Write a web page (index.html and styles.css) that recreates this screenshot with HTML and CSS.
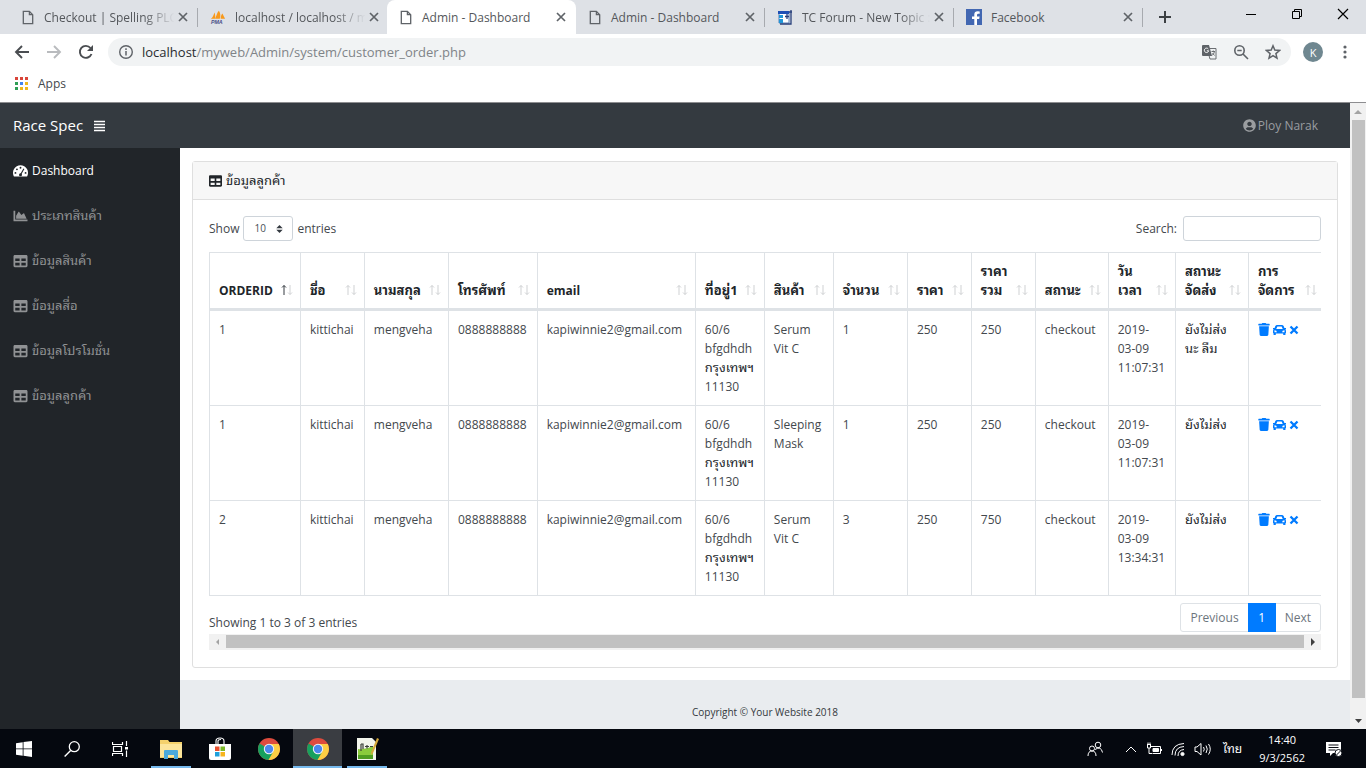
FILE: index.html
```html
<!DOCTYPE html>
<html lang="th">
<head>
<meta charset="utf-8">
<title>Admin - Dashboard</title>
<link rel="stylesheet" href="styles.css">
</head>
<body>
<svg class="defs" aria-hidden="true">
  <symbol id="close" viewBox="0 0 10 10"><path d="M1 1l8 8M9 1L1 9" stroke="currentColor" stroke-width="1.7"/></symbol>
  <symbol id="file" viewBox="0 0 12 16"><path d="M1 1.500h6.500L11 5v9.500H1zM7.500 1.500V5H11" fill="none" stroke="currentColor" stroke-width="1.400"/></symbol>
  <symbol id="table" viewBox="0 0 512 512"><path fill="currentColor" d="M464 32H48C21.490 32 0 53.490 0 80v352c0 26.510 21.490 48 48 48h416c26.510 0 48-21.490 48-48V80c0-26.510-21.490-48-48-48zM224 416H64v-96h160v96zm0-160H64v-96h160v96zm224 160H288v-96h160v96zm0-160H288v-96h160v96z"/></symbol>
  <symbol id="area" viewBox="0 0 512 512"><path fill="currentColor" d="M500 384c6.600 0 12 5.400 12 12v40c0 6.600-5.400 12-12 12H12c-6.600 0-12-5.400-12-12V76c0-6.600 5.400-12 12-12h40c6.600 0 12 5.400 12 12v308h436zM372.700 159.500L288 216l-85.300-113.700c-5.100-6.800-15.500-6.300-19.900 1L96 248v104h384l-89.900-187.800c-3.200-6.500-11.400-8.700-17.400-4.700z"/></symbol>
  <symbol id="gauge" viewBox="0 0 16 14"><path fill="currentColor" d="M8 1a8 8 0 0 0-7 11.900h14A8 8 0 0 0 8 1z"/><g fill="#212529"><circle cx="2.600" cy="9" r="1"/><circle cx="4.200" cy="5.200" r="1"/><circle cx="8" cy="3.500" r="1"/><circle cx="13.400" cy="9" r="1"/></g><path d="M8 11l3.600-6.400" stroke="#212529" stroke-width="1.200"/><circle cx="8" cy="11" r="1.600" fill="#212529"/></symbol>
  <symbol id="user" viewBox="0 0 496 512"><path fill="currentColor" d="M248 8C111 8 0 119 0 256s111 248 248 248 248-111 248-248S385 8 248 8zm0 96c48.600 0 88 39.400 88 88s-39.400 88-88 88-88-39.400-88-88 39.400-88 88-88zm0 344c-58.700 0-111.300-26.600-146.500-68.200 18.800-35.400 55.600-59.800 98.500-59.800 2.400 0 4.800.4 7.100 1.100 13 4.200 26.600 6.900 40.900 6.900 14.300 0 28-2.700 40.900-6.900 2.300-.7 4.700-1.100 7.100-1.100 42.900 0 79.700 24.400 98.500 59.800C359.300 421.400 306.700 448 248 448z"/></symbol>
  <symbol id="trash" viewBox="0 0 448 512"><path fill="currentColor" d="M432 32H312l-9.400-18.700A24 24 0 0 0 281.100 0H166.800a23.720 23.720 0 0 0-21.400 13.300L136 32H16A16 16 0 0 0 0 48v32a16 16 0 0 0 16 16h416a16 16 0 0 0 16-16V48a16 16 0 0 0-16-16zM53.200 467a48 48 0 0 0 47.900 45h245.800a48 48 0 0 0 47.900-45L416 128H32z"/></symbol>
  <symbol id="car" viewBox="0 0 14 12"><path fill="currentColor" fill-rule="evenodd" d="M4.500.5h5q1.500 0 2.100 1.500l.7 1.900H14v1.200h-.8Q14 6 14 7v2l-.6.700v1.800h-2.400V9.800H3v1.700H.6V9.700L0 9V7q0-1 .8-1.900H0V3.900h1.700L2.400 2Q3 .5 4.500.5zM4.700 2.200L3.500 4.800h7L9.300 2.200zM1.600 6.300v2h2.600q0-1.800-2.600-2zm10.800 0v2H9.800q0-1.800 2.600-2z"/></symbol>
  <symbol id="times" viewBox="0 0 10 10"><path d="M1.500 1.500l7 7M8.500 1.500l-7 7" stroke="currentColor" stroke-width="2.300"/></symbol>
  <symbol id="sort" viewBox="0 0 12 12"><path d="M3 11V1.500M1 3.500l2-2 2 2" stroke="currentColor"/><path d="M9 1v9.500M7 8.500l2 2 2-2" stroke="#cfd1d3"/></symbol>
  <symbol id="chrome" viewBox="0 0 24 24"><circle cx="12" cy="12" r="11" fill="#dd4b3e"/><path d="M12 12L2.500 6.500A11 11 0 0 0 11.500 23l5.300-8.300z" fill="#17a05e"/><path d="M12 7h9.800A11 11 0 0 1 11.500 23l4.900-8.500z" fill="#fdce44"/><circle cx="12" cy="12" r="5.200" fill="#f4f4f4"/><circle cx="12" cy="12" r="4.200" fill="#4a87ee"/></symbol>
</svg>

<header class="browser">
  <div class="tabstrip">
    <div class="tab"><svg class="fav"><use href="#file"/></svg><span class="title fade">Checkout | Spelling PLC</span><button class="x" aria-label="Close tab"><svg><use href="#close"/></svg></button></div>
    <div class="tab"><svg class="fav wide" viewBox="0 0 18 16"><path d="M1 10c2-1 3-4 4-7 1 2 1 5 1 7zM6 10c1-3 2-7 4-9 2 3 2 6 1 9zM12 10c0-3 1-5 2-6 1 2 2 4 3 6z" fill="#f8991c"/><text x="1" y="16" class="pma">PMA</text></svg><span class="title fade">localhost / localhost / m</span><button class="x" aria-label="Close tab"><svg><use href="#close"/></svg></button></div>
    <div class="tab active"><svg class="fav"><use href="#file"/></svg><span class="title">Admin - Dashboard</span><button class="x" aria-label="Close tab"><svg><use href="#close"/></svg></button></div>
    <div class="tab"><svg class="fav"><use href="#file"/></svg><span class="title">Admin - Dashboard</span><button class="x" aria-label="Close tab"><svg><use href="#close"/></svg></button></div>
    <div class="tab"><svg class="fav wide" viewBox="0 0 16 16"><path d="M2 3h10v11H2z" fill="#fff" stroke="#5b7fb5"/><path d="M1 2h11v3H1z" fill="#1f4fb4"/><path d="M2 6h4v3H2zM2 10h4v4H2z" fill="#2196d8"/><path d="M14 1v14H3M10 5v5M8 7.500h4M12 3h3" fill="none" stroke="#29407c" stroke-width="1.300"/></svg><span class="title fade">TC Forum - New Topic :</span><button class="x" aria-label="Close tab"><svg><use href="#close"/></svg></button></div>
    <div class="tab"><svg class="fav wide" viewBox="0 0 16 16"><path d="M0 0h16v16H0z" fill="#4267b2"/><path d="M11 16V10h2.200l.4-2.500H11V6q0-1.300 1.300-1.300h1.400V2.500Q8.300 1.500 8.300 5.500v2H6V10h2.300v6z" fill="#fff"/></svg><span class="title">Facebook</span><button class="x" aria-label="Close tab"><svg><use href="#close"/></svg></button></div>
    <button class="newtab" aria-label="New tab"><svg viewBox="0 0 12 12"><path d="M6 0v12M0 6h12" stroke="#3c4043" stroke-width="2"/></svg></button>
    <div class="winbtns">
      <button aria-label="Minimize"><svg viewBox="0 0 12 12"><path d="M1 6.500h10" stroke="#000"/></svg></button>
      <button aria-label="Restore"><svg viewBox="0 0 12 12"><path d="M1.500 3.500h7v7h-7zM3.500 3.500v-2h7v7h-2" fill="none" stroke="#000"/></svg></button>
      <button aria-label="Close"><svg viewBox="0 0 12 12"><path d="M1 1l10 10M11 1L1 11" stroke="#000" stroke-width="1.200"/></svg></button>
    </div>
  </div>
  <div class="toolbar">
    <button class="nav" aria-label="Back"><svg viewBox="0 0 16 16"><path d="M15 8H2M8 2L2 8l6 6" fill="none" stroke="#4a4d51" stroke-width="1.900"/></svg></button>
    <button class="nav" aria-label="Forward"><svg viewBox="0 0 16 16"><path d="M1 8h13M8 2l6 6-6 6" fill="none" stroke="#b9bbbe" stroke-width="1.900"/></svg></button>
    <button class="nav" aria-label="Reload"><svg viewBox="0 0 16 16"><path d="M13.500 10A6 6 0 1 1 12.500 4" fill="none" stroke="#4a4d51" stroke-width="1.900"/><path d="M15 1v6H9z" fill="#4a4d51"/></svg></button>
    <div class="omnibox">
      <svg class="i16" viewBox="0 0 16 16"><circle cx="8" cy="8" r="6.300" fill="none" stroke="#5f6368" stroke-width="1.400"/><path d="M8 7v4.500M8 4.300v1.600" stroke="#5f6368" stroke-width="1.500"/></svg>
      <span class="url"><b>localhost</b>/myweb/Admin/system/customer_order.php</span>
      <button aria-label="Translate"><svg class="i16" viewBox="0 0 16 16"><path d="M6 4.500h9v10.500H9z" fill="#f1f3f4" stroke="#6b6e72"/><path d="M2 1h6l3 11H2Q1 12 1 11V2q0-1 1-1z" fill="#5f6368"/><path d="M7.300 5A2.200 2.200 0 1 0 7.700 6.800H5.800" fill="none" stroke="#fff"/><path d="M10.500 7.500H14M12.300 6.500v1M13.500 7.500q-.5 2.500-2.500 4M11.500 9l2 2.500" fill="none" stroke="#6b6e72"/></svg></button>
      <button aria-label="Zoom"><svg class="i16" viewBox="0 0 16 16"><circle cx="6.500" cy="6.500" r="4.700" fill="none" stroke="#5f6368" stroke-width="1.600"/><path d="M10 10l5 5M4.300 6.500h4.400" stroke="#5f6368" stroke-width="1.600"/></svg></button>
      <button aria-label="Bookmark"><svg class="i16" viewBox="0 0 16 16"><path d="M8 1.800l1.800 4.300 4.700.4-3.600 3.100 1.100 4.600-4-2.500-4 2.500 1.100-4.600L1.500 6.500l4.700-.4z" fill="none" stroke="#5f6368" stroke-width="1.500"/></svg></button>
    </div>
    <button class="avatar" aria-label="Profile">K</button>
    <button class="menu" aria-label="Menu"><svg viewBox="0 0 4 16"><circle cx="2" cy="3" r="1.600"/><circle cx="2" cy="8" r="1.600"/><circle cx="2" cy="13" r="1.600"/></svg></button>
  </div>
  <div class="bookmarks"><svg viewBox="0 0 13 13"><path d="M0 0h3v3H0zM5 0h3v3H5zM10 0h3v3h-3z" fill="#d9453a"/><path d="M0 5h3v3H0zM0 10h3v3H0z" fill="#2f9e55"/><path d="M5 5h3v3H5z" fill="#4284f0"/><path d="M10 5h3v3h-3zM5 10h3v3H5zM10 10h3v3h-3z" fill="#efb81d"/></svg><a href="#">Apps</a></div>
</header>

<div class="viewport">
  <div class="page">
    <nav class="topnav">
      <a class="brand" href="#">Race Spec</a>
      <button class="bars" aria-label="Toggle sidebar"><svg viewBox="0 0 12 12"><path d="M0 1.500h11M0 4.500h11M0 7.500h11M0 10.500h11" stroke="#fff" stroke-width="1.700"/></svg></button>
      <a class="account" href="#"><svg><use href="#user"/></svg>Ploy Narak</a>
    </nav>
    <div class="body">
      <ul class="sidebar">
        <li><a class="on" href="#"><svg><use href="#gauge"/></svg>Dashboard</a></li>
        <li><a href="#"><svg><use href="#area"/></svg>ประเภทสินค้า</a></li>
        <li><a href="#"><svg><use href="#table"/></svg>ข้อมูลสินค้า</a></li>
        <li><a href="#"><svg><use href="#table"/></svg>ข้อมูลสื่อ</a></li>
        <li><a href="#"><svg><use href="#table"/></svg>ข้อมูลโปรโมชั่น</a></li>
        <li><a href="#"><svg><use href="#table"/></svg>ข้อมูลลูกค้า</a></li>
      </ul>
      <div class="content">
        <section class="card">
          <div class="card-head"><svg><use href="#table"/></svg>ข้อมูลลูกค้า</div>
          <div class="card-body">
            <div class="controls">
              <label for="len">Show</label>
              <span class="pick"><select id="len"><option>10</option></select><svg viewBox="0 0 8 10"><path d="M4 0l4 4H0zM4 10l4-4H0z" fill="#343a40"/></svg></span>
              <label for="len">entries</label>
              <label class="find" for="q">Search:</label><input id="q" type="search">
            </div>
            <div class="clip">
              <table>
                <colgroup><col class="w91"><col class="w64"><col class="w84"><col class="w89"><col class="w158"><col class="w69"><col class="w69"><col class="w74"><col class="w64"><col class="w64"><col class="w73"><col class="w67"><col class="w73"><col></colgroup>
                <thead><tr>
                  <th class="asc">ORDERID<svg><use href="#sort"/></svg></th>
                  <th class="th">ชื่อ<svg><use href="#sort"/></svg></th>
                  <th class="th">นามสกุล<svg><use href="#sort"/></svg></th>
                  <th class="th">โทรศัพท์<svg><use href="#sort"/></svg></th>
                  <th>email<svg><use href="#sort"/></svg></th>
                  <th class="th">ที่อยู่1<svg><use href="#sort"/></svg></th>
                  <th class="th">สินค้า<svg><use href="#sort"/></svg></th>
                  <th class="th">จำนวน<svg><use href="#sort"/></svg></th>
                  <th class="th">ราคา<svg><use href="#sort"/></svg></th>
                  <th class="th">ราคา<br>รวม<svg><use href="#sort"/></svg></th>
                  <th class="th">สถานะ<svg><use href="#sort"/></svg></th>
                  <th class="th">วัน<br>เวลา<svg><use href="#sort"/></svg></th>
                  <th class="th">สถานะ<br>จัดส่ง<svg><use href="#sort"/></svg></th>
                  <th class="th">การ<br>จัดการ<svg><use href="#sort"/></svg></th>
                </tr></thead>
                <tbody>
                <tr><td>1</td><td>kittichai</td><td>mengveha</td><td>0888888888</td><td>kapiwinnie2@gmail.com</td><td>60/6<br>bfgdhdh<br><span class="th">กรุงเทพฯ</span><br>11130</td><td>Serum<br>Vit C</td><td>1</td><td>250</td><td>250</td><td>checkout</td><td>2019-<br>03-09<br>11:07:31</td><td class="th">ยังไม่ส่ง<br>นะ ลืม</td><td><div class="acts"><a href="#" aria-label="Delete"><svg class="t"><use href="#trash"/></svg></a><a href="#" aria-label="Ship"><svg class="c"><use href="#car"/></svg></a><a href="#" aria-label="Cancel"><svg class="m"><use href="#times"/></svg></a></div></td></tr>
                <tr><td>1</td><td>kittichai</td><td>mengveha</td><td>0888888888</td><td>kapiwinnie2@gmail.com</td><td>60/6<br>bfgdhdh<br><span class="th">กรุงเทพฯ</span><br>11130</td><td>Sleeping<br>Mask</td><td>1</td><td>250</td><td>250</td><td>checkout</td><td>2019-<br>03-09<br>11:07:31</td><td class="th">ยังไม่ส่ง</td><td><div class="acts"><a href="#" aria-label="Delete"><svg class="t"><use href="#trash"/></svg></a><a href="#" aria-label="Ship"><svg class="c"><use href="#car"/></svg></a><a href="#" aria-label="Cancel"><svg class="m"><use href="#times"/></svg></a></div></td></tr>
                <tr><td>2</td><td>kittichai</td><td>mengveha</td><td>0888888888</td><td>kapiwinnie2@gmail.com</td><td>60/6<br>bfgdhdh<br><span class="th">กรุงเทพฯ</span><br>11130</td><td>Serum<br>Vit C</td><td>3</td><td>250</td><td>750</td><td>checkout</td><td>2019-<br>03-09<br>13:34:31</td><td class="th">ยังไม่ส่ง</td><td><div class="acts"><a href="#" aria-label="Delete"><svg class="t"><use href="#trash"/></svg></a><a href="#" aria-label="Ship"><svg class="c"><use href="#car"/></svg></a><a href="#" aria-label="Cancel"><svg class="m"><use href="#times"/></svg></a></div></td></tr>
                </tbody>
              </table>
            </div>
            <div class="below">
              <span>Showing 1 to 3 of 3 entries</span>
              <div class="pager"><button>Previous</button><button class="cur">1</button><button>Next</button></div>
            </div>
            <div class="hbar"><svg viewBox="0 0 17 16"><path d="M10 5v6L7 8z" fill="#a3a3a3"/></svg><i></i><svg viewBox="0 0 17 16"><path d="M7 4v8l4-4z" fill="#404040"/></svg></div>
          </div>
        </section>
        <footer>Copyright © Your Website 2018</footer>
      </div>
    </div>
  </div>
  <div class="vbar"><svg viewBox="0 0 16 17"><path d="M4 11h8L8 7z" fill="#a3a3a3"/></svg><i></i><svg viewBox="0 0 16 17"><path d="M5 7h7l-3.500 4z" fill="#404040"/></svg></div>
</div>

<footer class="taskbar">
  <button class="task sys" aria-label="Start"><svg viewBox="0 0 16 16"><path d="M0 2.200L6.700 1.200v6.300H0zM7.500 1.100L16 0v7.500H7.500zM0 8.300h6.700v6.400L0 13.800zM7.500 8.300H16V16l-8.500-1.200z" fill="#fff"/></svg></button>
  <button class="task sys" aria-label="Search"><svg viewBox="0 0 16 16"><circle cx="10.300" cy="5.700" r="5" fill="none" stroke="#fff" stroke-width="1.300"/><path d="M6.600 9.400L.6 15.400" stroke="#fff" stroke-width="1.400"/></svg></button>
  <button class="task sys" aria-label="Task view"><svg viewBox="0 0 16 16"><path d="M.5 1v2.500h10V1M.5 15v-2.500h10V15M1.500 5.500h8v5h-8zM14.500 0v5M14.500 9.500V16" fill="none" stroke="#fff" stroke-width="1.200"/><path d="M13 6h3v2.500h-3z" fill="#fff"/></svg></button>
  <div class="apps">
  <button class="task open" aria-label="File Explorer"><svg viewBox="0 0 24 24"><path d="M1 3h8l1.500 2H23v16H1z" fill="#f4d16c"/><path d="M1 7h22v13H1z" fill="#fce59b"/><path d="M5 22v-8q0-1 1-1h12q1 0 1 1v8h-4v-4H9v4z" fill="#4aa9dc"/></svg></button>
  <button class="task" aria-label="Store"><svg viewBox="0 0 24 24"><path d="M8 7V4q0-3 4-3t4 3v3M10 7V4q0-1.500 3-1.500" fill="none" stroke="#fff" stroke-width="1.100"/><path d="M1 7h22v14q0 2-2 2H3q-2 0-2-2z" fill="#fff"/><path d="M7 9.500h4.500V14H7z" fill="#e8502f"/><path d="M12.500 9.500H17V14h-4.500z" fill="#7cb928"/><path d="M7 15h4.500v4.500H7z" fill="#1fa0dc"/><path d="M12.500 15H17v4.500h-4.500z" fill="#f7b51e"/></svg></button>
  <button class="task" aria-label="Chrome"><svg><use href="#chrome"/></svg></button>
  <button class="task open live" aria-label="Chrome window"><svg><use href="#chrome"/></svg></button>
  <button class="task open" aria-label="Notepad++"><svg viewBox="0 0 24 24"><path d="M2 1h15l4 4v18H2z" fill="#f2f5ec"/><path d="M3 12q8 1 15-3v13H3z" fill="#8acb3c"/><path d="M3 18h15v4H3z" fill="#4f9d21"/><path d="M6 7v7M6 7h2v5M10 9.500h4M12 8v3.500M15 9.500h3" stroke="#3a4038" fill="none" stroke-width="1.200"/><path d="M22 1l2 1-6 14-2 2 .3-3z" fill="#d5a93a"/></svg></button>
  </div>
  <div class="tray">
    <svg class="people" viewBox="0 0 16 16"><circle cx="11" cy="4" r="2.800"/><circle cx="5" cy="7.500" r="2.500"/><path d="M1 15q0-5 4-5t4 5M8 8.500q6-4 7.500 3"/></svg>
    <svg class="chev" viewBox="0 0 12 16"><path d="M1 11l5-5 5 5"/></svg>
    <svg class="i16" viewBox="0 0 16 16"><path d="M4.500 5.500h10v7h-8M15.500 8v2M1 3.500h4M2 1.500v2M4 1.500v2M1.500 4v3H4.500V4M3 7v5.500h3"/><path d="M7 7.500h5.500v3H7z" fill="#fff"/></svg>
    <svg class="wifi" viewBox="0 0 14 16"><path d="M1 14Q1 3 13 2.500M4 14.500Q4 6 13 5.500M7 15Q7 9 13 8.500"/><circle cx="11.500" cy="13" r="1.600" fill="#fff"/></svg>
    <svg class="vol" viewBox="0 0 18 16"><path d="M1 6v4.500h2L7 14V2.500L3 6zM9.500 6q1.500 2.200 0 4.500M12 4.500q2.500 3.500 0 7.500M14.500 3q3.500 5 0 10.500"/></svg>
    <span class="lang">ไทย</span>
    <span class="clock">14:40<br>9/3/2562</span>
    <svg class="note" viewBox="0 0 18 18"><path d="M1 2h15v11h-8l-3 3v-3H1z" fill="#fff" stroke="none"/><path d="M3.500 5h10M3.500 7.500h10M3.500 10h7" stroke="#0a0d14"/><circle cx="13.500" cy="13" r="3.500" fill="#fff" stroke="#0a0d14"/><path d="M11.500 15l4-4" stroke="#0a0d14"/></svg>
  </div>
</footer>
</body>
</html>
```
FILE: styles.css
```css
* { box-sizing: border-box; }
body {
  margin: 0;
  min-height: 100vh;
  display: flex;
  flex-direction: column;
  font-family: "Open Sans", "Noto Sans", "Leelawadee UI", "Noto Sans Thai Looped", "Loma", "Waree", sans-serif;
  font-size: 12px;
  line-height: 19px;
  color: #43484d;
  background: #fff;
}
.defs { position: absolute; width: 0; height: 0; }
svg { display: block; flex: none; }
button {
  margin: 0;
  padding: 0;
  border: 0;
  background: none;
  font: inherit;
  color: inherit;
  display: flex;
  align-items: center;
  justify-content: center;
}
a { color: inherit; text-decoration: none; }

/* Browser frame */
.browser { border-bottom: 1px solid #8d8d90; }
.tabstrip {
  display: flex;
  height: 34px;
  padding-left: 9px;
  background: #dee1e6;
  color: #54575b;
}
.tab {
  flex: 0 1 189px;
  min-width: 0;
  display: flex;
  align-items: center;
  gap: 9px;
  padding: 0 10px 0 12px;
  background: linear-gradient(#a7aaaf, #a7aaaf) right center / 1px 19px no-repeat;
}
.tab:has(+ .active), .tab.active { background-image: none; }
.tab.active { background-color: #fff; border-radius: 8px 8px 0 0; }
.fav { width: 14px; height: 15px; color: #5f6368; }
.fav.wide { width: 16px; height: 16px; }
.pma { font: italic bold 6px "Liberation Sans", sans-serif; fill: #4a4f86; }
.title { flex: 1; white-space: nowrap; }
.fade { margin-right: -8px; mask-image: linear-gradient(90deg, #000 75%, transparent 98%); }
.x svg { width: 10px; height: 10px; color: #5f6368; }
.newtab { width: 44px; }
.newtab svg { width: 12px; height: 12px; }
.winbtns { display: flex; margin-left: auto; height: 28px; }
.winbtns button { width: 46px; }
.winbtns svg { width: 12px; height: 12px; }
.toolbar { display: flex; align-items: center; height: 36px; padding: 0 19px 0 6px; }
.nav { width: 32px; height: 28px; }
.nav svg, .i16 { width: 16px; height: 16px; }
.omnibox {
  flex: 1;
  display: flex;
  align-items: center;
  gap: 16px;
  height: 28px;
  margin: 0 12px 0 6px;
  padding: 0 10px;
  border-radius: 14px;
  background: #f1f3f4;
}
.url { flex: 1; margin-left: -8px; font-size: 13px; color: #808488; }
.url b { font-weight: 400; color: #292c30; }
.avatar {
  width: 20px;
  height: 20px;
  border-radius: 50%;
  background: #6f8790;
  color: #fff;
  font-size: 11px;
}
.menu { margin-left: 20px; }
.menu svg { width: 4px; height: 16px; fill: #5f6368; }
.bookmarks { display: flex; align-items: center; gap: 10px; height: 32px; padding: 0 15px 5px; color: #45484c; }
.bookmarks svg { width: 13px; height: 13px; }

/* Page area */
.viewport { flex: 1; display: flex; }
.page { flex: 1; min-width: 0; display: flex; flex-direction: column; }
.topnav {
  display: flex;
  align-items: center;
  height: 45px;
  padding: 0 32px 0 13px;
  background: #343a40;
  color: #fff;
}
.brand { font-size: 15px; }
.bars { margin-left: 11px; }
.bars svg { width: 12px; height: 12px; }
.account { display: flex; align-items: center; gap: 2px; margin-left: auto; color: #9a9da0; }
.account svg { width: 13px; height: 13px; }
.body { flex: 1; display: flex; }
.sidebar {
  width: 180px;
  margin: 0;
  padding: 0;
  list-style: none;
  background: #212529;
  color: #909294;
  font-size: 13px;
}
.sidebar a { display: flex; align-items: center; gap: 4px; height: 45px; padding: 0 13px; }
.sidebar svg { width: 15px; height: 14px; }
.sidebar .on { color: #fff; font-size: 12px; }
.content { flex: 1; min-width: 0; display: flex; flex-direction: column; }
.card { margin: 13px 12px 12px; border: 1px solid #dfdfdf; border-radius: 3px; }
.card-head {
  display: flex;
  align-items: center;
  gap: 4px;
  height: 38px;
  padding: 0 16px;
  border-bottom: 1px solid #dfdfdf;
  background: #f7f7f7;
  color: #212529;
  font-size: 13px;
}
.card-head svg { width: 13px; height: 14px; }
.card-body { padding: 16px 16px 17px; }
.controls { display: flex; align-items: center; gap: 4px; height: 25px; margin-bottom: 11px; }
.pick { position: relative; }
.pick select {
  display: block;
  width: 50px;
  height: 25px;
  padding: 0 10px;
  border: 1px solid #ced4da;
  border-radius: 3px;
  background: #fff;
  appearance: none;
  font: inherit;
  font-size: 10px;
  color: #495057;
}
.pick svg { position: absolute; right: 10px; top: 9px; width: 7px; height: 8px; pointer-events: none; }
.find { margin-left: auto; }
.controls input {
  width: 138px;
  height: 25px;
  margin-left: 2px;
  border: 1px solid #ced4da;
  border-radius: 3px;
  background: #fff;
  font: inherit;
  appearance: none;
}

/* Orders table */
.clip { overflow: hidden; }
table { width: 101%; table-layout: fixed; border-collapse: collapse; }
.w64 { width: 5.7%; }
.w67 { width: 6%; }
.w69 { width: 6.15%; }
.w73 { width: 6.5%; }
.w74 { width: 6.6%; }
.w84 { width: 7.5%; }
.w89 { width: 7.9%; }
.w91 { width: 8.1%; }
.w158 { width: 14.1%; }
th, td {
  padding: 9px;
  border: 1px solid #dee2e6;
  text-align: left;
  vertical-align: top;
  white-space: nowrap;
}
th {
  position: relative;
  padding-bottom: 8px;
  border-bottom: 3px solid #dee2e6;
  vertical-align: bottom;
  color: #212529;
}
.th { font-size: 13px; color: #212529; }
span.th { line-height: 1; }
th svg {
  position: absolute;
  right: 7px;
  bottom: 12px;
  width: 12px;
  height: 12px;
  fill: none;
  color: #cfd1d3;
}
th.asc svg { color: #343a40; }
th:last-child svg { right: 14px; }
.acts { display: flex; align-items: center; gap: 3px; height: 19px; color: #007bff; }
.t { width: 12px; height: 13px; }
.c { width: 13px; height: 12px; }
.m { width: 10px; height: 10px; }
.below { display: flex; justify-content: space-between; align-items: flex-end; padding-top: 7px; }
.pager { display: flex; height: 29px; border: 1px solid #dee2e6; border-radius: 3px; color: #6c757d; }
.pager button { padding: 0 9px; }
.pager .cur { margin: -1px 0; width: 28px; background: #007bff; color: #fff; }
.hbar { display: flex; height: 16px; margin-top: 2px; background: #f1f1f1; }
.hbar svg { width: 17px; height: 16px; }
.hbar i { flex: 1; margin: 1px 0 2px; background: #c1c1c1; }
.content footer {
  flex: 1;
  display: flex;
  align-items: center;
  justify-content: center;
  padding-top: 16px;
  background: #e9ecef;
  font-size: 10px;
  color: #33383c;
}
.vbar { display: flex; flex-direction: column; width: 16px; background: #f1f1f1; }
.vbar svg { width: 16px; height: 17px; }
.vbar i { flex: 1; margin: 0 1px 14px 2px; background: #c1c1c1; }

/* Taskbar */
.taskbar { display: flex; height: 39px; background: #05080f; color: #fff; }
.task { width: 49px; height: 39px; }
.task svg { width: 24px; height: 24px; }
.sys { width: 48px; }
.sys svg { width: 16px; height: 16px; }
.apps { display: flex; margin-left: 2px; }
.task.open { background: linear-gradient(#76b9ed, #76b9ed) center bottom / 40px 2px no-repeat; }
.task.live { background: linear-gradient(#76b9ed, #76b9ed) center bottom / 100% 2px no-repeat, #3a3d42; }
.tray { display: flex; align-items: center; gap: 9px; margin-left: auto; padding-right: 23px; }
.tray svg { fill: none; stroke: #fff; }
.people { width: 16px; height: 16px; margin-right: 13px; }
.chev { width: 12px; height: 16px; }
.wifi { width: 14px; height: 16px; }
.vol { width: 18px; height: 16px; }
.lang { margin: 0 8px 0 2px; }
.clock { font-size: 11px; line-height: 18px; text-align: center; }
.tray .note { width: 18px; height: 18px; margin-left: 11px; }
```
